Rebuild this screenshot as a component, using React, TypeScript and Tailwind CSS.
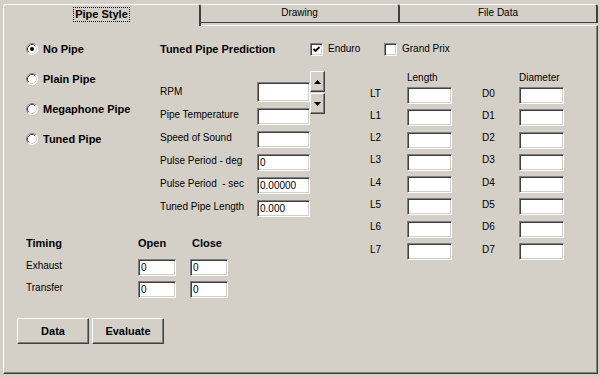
import React from "react";

function Radio({ checked }: { checked?: boolean }) {
  return (
    <svg width="12" height="12" viewBox="0 0 12 12" className="shrink-0">
      <circle cx="6" cy="6" r="5.5" fill="#ffffff" />
      <path d="M2.11 9.89 A5.5 5.5 0 0 1 9.89 2.11" fill="none" stroke="#808080" strokeWidth="1" />
      <path d="M2.82 9.18 A4.5 4.5 0 0 1 9.18 2.82" fill="none" stroke="#404040" strokeWidth="1" />
      <path d="M9.89 2.11 A5.5 5.5 0 0 1 2.11 9.89" fill="none" stroke="#ffffff" strokeWidth="1" />
      <path d="M9.18 2.82 A4.5 4.5 0 0 1 2.82 9.18" fill="none" stroke="#d4d0c8" strokeWidth="1" />
      {checked && <circle cx="6" cy="6" r="2" fill="#000000" />}
    </svg>
  );
}

function Check({ checked }: { checked?: boolean }) {
  return (
    <div className="w-[13px] h-[13px] shrink-0 bg-white border border-t-[#808080] border-l-[#808080] border-r-white border-b-white shadow-[inset_1px_1px_0_#404040,inset_-1px_-1px_0_#d4d0c8] flex items-center justify-center">
      {checked && (
        <svg width="9" height="9" viewBox="0 0 9 9">
          <polyline points="1.5,4 3.5,6 7.5,2" fill="none" stroke="#000" strokeWidth="1.8" />
        </svg>
      )}
    </div>
  );
}

function Field({ cls, value }: { cls: string; value?: string }) {
  return (
    <div
      className={
        "shrink-0 bg-white border border-t-[#808080] border-l-[#808080] border-r-white border-b-white shadow-[inset_1px_1px_0_#404040,inset_-1px_-1px_0_#d4d0c8] flex items-center pl-[2px] text-[10px] leading-none text-black " +
        cls
      }
    >
      {value}
    </div>
  );
}

function SpinBtn({ up }: { up?: boolean }) {
  return (
    <div className="w-[15px] h-[21px] bg-[#d4d0c8] border border-t-white border-l-white border-r-[#404040] border-b-[#404040] shadow-[inset_-1px_-1px_0_#808080] flex items-center justify-center">
      <svg width="7" height="4" viewBox="0 0 7 4">
        {up ? <polygon points="0,4 7,4 3.5,0" fill="#000" /> : <polygon points="0,0 7,0 3.5,4" fill="#000" />}
      </svg>
    </div>
  );
}

function Button({ label }: { label: string }) {
  return (
    <div className="w-[72px] h-[26px] shrink-0 bg-[#d4d0c8] border border-t-white border-l-white border-r-[#404040] border-b-[#404040] shadow-[inset_-1px_-1px_0_#808080] flex items-center justify-center text-[11px] font-bold text-black">
      {label}
    </div>
  );
}

const midRows: { label: string; value?: string }[] = [
  { label: "Pipe Temperature" },
  { label: "Speed of Sound" },
  { label: "Pulse Period - deg", value: "0" },
  { label: "Pulse Period \u00a0- sec", value: "0.00000" },
  { label: "Tuned Pipe Length", value: "0.000" },
];

const rightRows = ["T", "1", "2", "3", "4", "5", "6", "7"];

export default function App() {
  return (
    <div className="w-[600px] h-[377px] bg-[#d4d0c8] pt-[4px] pl-[3px] pr-[2px] pb-[3px] flex flex-col font-['Liberation_Sans',Arial,sans-serif] text-black select-none whitespace-nowrap">
      {/* Tabs */}
      <div className="flex items-start h-[22px] -mb-[1px] relative z-10">
        <div className="w-[198px] shrink-0 h-[22px] bg-[#d4d0c8] border-t border-l border-white border-r-2 border-r-[#404040] rounded-tl-[3px] rounded-tr-[3px] flex justify-center pt-[2px]">
          <div className="h-[15px] px-[1px] border border-dotted border-black flex items-center text-[11px] font-bold leading-none">
            Pipe Style
          </div>
        </div>
        <div className="w-[199px] shrink-0 h-[19px] bg-[#d4d0c8] border-t border-white border-r-2 border-r-[#404040] border-b border-b-[#404040] rounded-tr-[3px] flex items-center justify-center text-[10px] leading-none pb-[2px]">
          Drawing
        </div>
        <div className="flex-1 h-[19px] bg-[#d4d0c8] border-t border-white border-r-2 border-r-[#404040] border-b border-b-[#404040] rounded-tr-[3px] flex items-center justify-center text-[10px] leading-none pb-[2px]">
          File Data
        </div>
      </div>

      {/* Panel */}
      <div className="flex-1 flex border-t border-l border-white border-r border-b border-r-[#404040] border-b-[#404040] shadow-[inset_-1px_-1px_0_#808080]">
        {/* Left block */}
        <div className="ml-[13px] w-[353px] shrink-0 mt-[16px] flex flex-col">
          <div className="flex items-start">
            {/* Radios */}
            <div className="w-[143px] shrink-0 pl-[9px] flex flex-col gap-[16px]">
              {[
                { l: "No Pipe", c: true },
                { l: "Plain Pipe" },
                { l: "Megaphone Pipe" },
                { l: "Tuned Pipe" },
              ].map((r) => (
                <div key={r.l} className="h-[14px] flex items-center gap-[5px]">
                  <Radio checked={r.c} />
                  <span className="text-[11px] font-bold leading-none">{r.l}</span>
                </div>
              ))}
            </div>
            {/* Middle */}
            <div className="shrink-0 flex flex-col">
              <div className="h-[14px] flex items-center">
                <span className="w-[150px] shrink-0 text-[11px] font-bold leading-none">Tuned Pipe Prediction</span>
                <Check checked />
                <span className="ml-[5px] w-[56px] shrink-0 text-[10px] leading-none">Enduro</span>
                <Check />
                <span className="ml-[5px] text-[10px] leading-none">Grand Prix</span>
              </div>
              <div className="mt-[26px] flex flex-col gap-[6px]">
                <div className="h-[20px] flex items-center">
                  <span className="w-[97px] shrink-0 text-[10px] leading-none">RPM</span>
                  <div className="relative">
                    <Field cls="w-[53px] h-[20px]" />
                    <div className="absolute left-[53px] top-[-11px] flex flex-col gap-[1px]">
                      <SpinBtn up />
                      <SpinBtn />
                    </div>
                  </div>
                </div>
                {midRows.map((r) => (
                  <div key={r.label} className="h-[17px] flex items-center">
                    <span className="w-[97px] shrink-0 text-[10px] leading-none mb-[3px] whitespace-pre">{r.label}</span>
                    <Field cls="w-[53px] h-[17px]" value={r.value} />
                  </div>
                ))}
              </div>
            </div>
          </div>

          {/* Timing */}
          <div className="mt-[19px] pl-[9px] h-[14px] flex items-center text-[11px] font-bold leading-none">
            <span className="w-[112px] shrink-0">Timing</span>
            <span className="w-[52px] shrink-0">Open</span>
            <span className="pl-[2px]">Close</span>
          </div>
          {["Exhaust", "Transfer"].map((t, i) => (
            <div key={t} className={(i === 0 ? "mt-[9px] " : "mt-[5px] ") + "pl-[9px] h-[17px] flex items-center"}>
              <span className="w-[112px] shrink-0 text-[10px] leading-none mb-[3px]">{t}</span>
              <Field cls="w-[38px] h-[17px]" value="0" />
              <div className="ml-[14px]">
                <Field cls="w-[38px] h-[17px]" value="0" />
              </div>
            </div>
          ))}

          {/* Buttons */}
          <div className="mt-[20px] flex gap-[3px]">
            <Button label="Data" />
            <Button label="Evaluate" />
          </div>
        </div>

        {/* Right block */}
        <div className="mt-[45px] flex flex-col">
          <div className="h-[13px] flex items-center text-[10px] leading-none">
            <span className="ml-[37px] w-[112px] shrink-0">Length</span>
            <span>Diameter</span>
          </div>
          <div className="mt-[3px] flex flex-col gap-[5.3px]">
            {rightRows.map((n, i) => (
              <div key={n} className="h-[17px] flex items-center">
                <span className="w-[37px] shrink-0 text-[10px] leading-none mb-[4px]">L{n}</span>
                <Field cls="w-[45px] h-[17px]" />
                <span className="ml-[30px] w-[37px] shrink-0 text-[10px] leading-none mb-[4px]">D{i}</span>
                <Field cls="w-[45px] h-[17px]" />
              </div>
            ))}
          </div>
        </div>
      </div>
    </div>
  );
}
